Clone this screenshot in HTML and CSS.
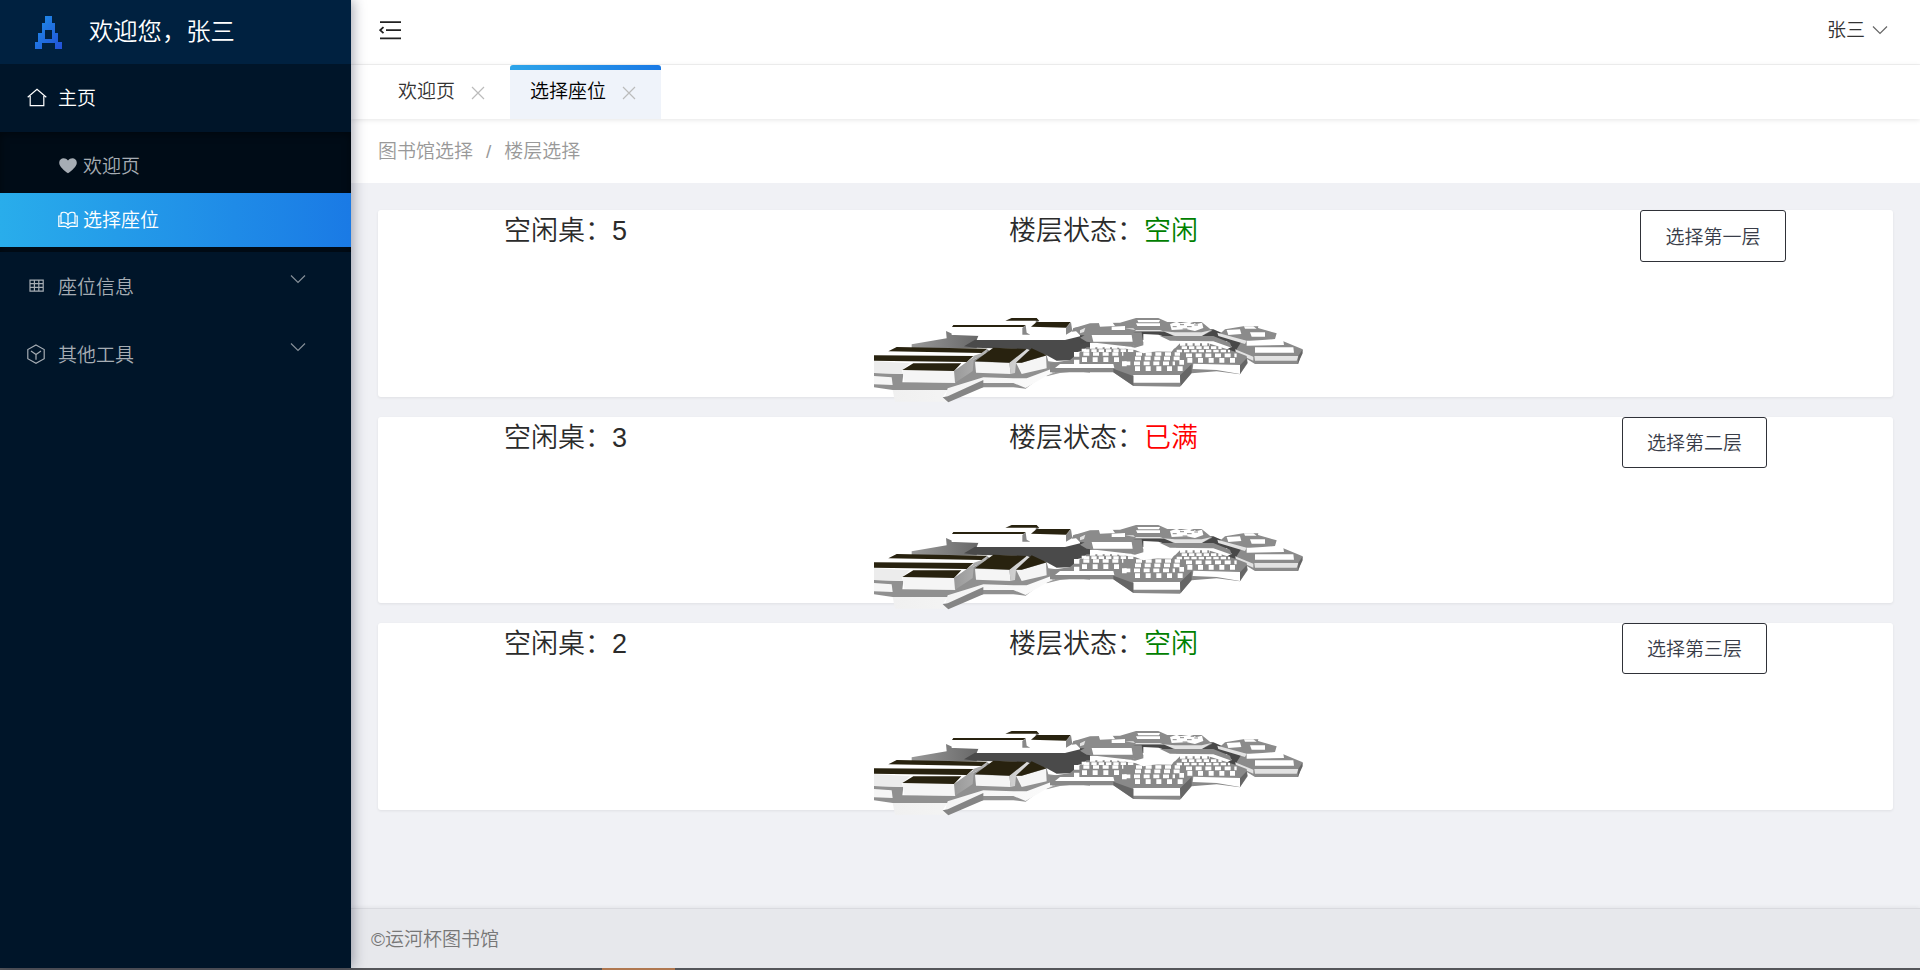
FILE: index.html
```html
<!DOCTYPE html>
<html lang="zh-CN">
<head>
<meta charset="utf-8">
<title>选择座位</title>
<link rel="stylesheet" href="styles.css">
</head>
<body>
<svg class="defs" aria-hidden="true">
  <defs>
    <linearGradient id="slope"><stop offset="0" stop-color="#999"/><stop offset="1" stop-color="#666"/></linearGradient>
    <linearGradient id="fade"><stop offset="0" stop-color="#f0f0f0"/><stop offset="1" stop-color="#fdfdfd"/></linearGradient>
    <linearGradient id="shade"><stop offset="0" stop-color="#999"/><stop offset="1" stop-color="#ddd"/></linearGradient>
    <linearGradient id="logoFill" x2="1" y2="1"><stop offset="0" stop-color="#1e90e8"/><stop offset="1" stop-color="#2350d8"/></linearGradient>
    <symbol id="building" viewBox="42 45 1290 264">
      <path fill="url(#slope)" d="M155 133L260 115 258 93 285 105 360 108 350 145 155 145z"/>
      <path fill="#4a4a4a" d="M345 119H610L690 96V150L655 155 640 180 590 182 560 166 500 148 345 143 312 139z"/>
      <path fill="#fff" d="M275 80H490L487 105H275zM436 62H530L520 82H497V76H450zM513 81L618 83V104H513zM355 108H615L675 96 685 103 615 120H350z"/>
      <path fill="#888" d="M487 84L497 76 500 98 511 104H487zM618 83L633 67 637 93 618 104zM640 84L690 76V88L636 95zM530 58L538 61 533 68H526z"/>
      <path fill="#28220f" d="M280 75H497L490 81H276zM455 54H530L537 62H436zM530 66H632L618 83 513 80z"/>
      <path fill="#909090" d="M42 219L130 222 127 247 285 248 340 180 382 148 400 160 500 150 560 166 565 184 600 188 690 178V204L600 213 550 225 497 266 460 262H370L262 271 98 270 42 262z"/>
      <path fill="#fff" d="M42 155L85 155 365 159 350 175 322 186 42 164z"/>
      <path fill="#ececec" d="M42 183L150 190 125 212 130 222 42 219z"/>
      <path fill="#f5f5f5" d="M42 228L95 232 98 255 42 253zM127 211L282 213 285 248 133 245zM345 185L448 188 452 222 348 218zM468 188H485L558 167 560 205 485 222z"/>
      <path fill="url(#shade)" d="M282 213L342 170 338 213 325 222 285 248zM448 188L500 148 508 150 468 188 465 219 452 222zM340 168L365 159 382 146 378 162 338 180z"/>
      <path fill="#28220f" d="M110 141L382 146 365 159 85 154zM42 166L340 168 320 186 42 182zM160 190H304L282 213 127 210zM400 143L500 147 448 188 345 184zM515 145L560 166 485 188H468z"/>
      <path fill="url(#fade)" d="M98 270H262L248 292 275 305H105zM263 265L370 232 460 235H500L600 197 690 191V201L595 207 497 264 460 249H370L255 292z"/>
      <path fill="#858585" d="M248 292L263 289 370 240V262L265 307z"/>
      <path fill="#9a9a9a" d="M560 227L600 210 690 204V218L650 214 600 219 560 229z"/>
      <g transform="translate(660 0)">
        <path fill="#484848" d="M0 95L160 92 400 88 480 122 525 150 520 180 430 145 190 120 0 130z"/>
        <path fill="#8b8b8b" d="M-20 85L30 70 120 68 168 54H235L262 66H365L397 92 365 108H280L260 96H165L135 100 0 106zM0 113L30 97H185L190 130 150 140 20 125zM435 88L490 79H535L534 84 590 100 585 117 500 124 415 106zM485 124H610L668 148 655 192 525 192 465 155z"/>
        <path fill="#fff" d="M55 64H95L105 78 60 80zM95 80L135 78V90H95zM172 60H240L237 67H175zM168 70H240V78H172zM35 105H155L158 125H40zM190 102L235 104 290 121 440 123 455 140 420 160 190 160zM440 90L480 88 484 102 445 105zM492 79H520L530 86H495zM510 97L555 97V110H515zM500 122H610L612 135 500 137zM525 142H640L642 158H525z"/>
        <path fill="#e2e2e2" d="M135 85H160L168 93H240L285 97H365L395 90 365 108H285L240 90H165zM0 91L16 83 12 96 0 100zM412 98L500 122 495 132 415 108zM523 168H655L650 182H525zM465 148L520 170V182L470 160z"/>
        <path fill="#8b8b8b" d="M240 108H400L450 128 455 143 400 124 270 122zM150 140L190 125V136L165 143z"/>
        <path fill="#fff" d="M270 72L290 65 300 70 330 65 350 72 366 68 370 84 345 93 320 88 275 90z"/>
        <path fill="none" stroke="#8b8b8b" stroke-width="3" d="M278 80H290M300 74H312M321 80H335M343 75H354M308 87H322M332 70H342"/>
        <path fill="#898989" d="M-12 165L20 142H105L165 150 190 160 285 145 300 130H385L475 158 500 168 503 190 480 223 410 214 335 220 300 260 160 258 100 217H-90V190L-30 180z"/>
        <path fill="#fff" d="M-60 192H100L103 204H-75zM340 191L480 195V222L410 210 338 207zM160 225H300V248H160zM190 145L285 142 275 155 195 154z"/>
        <path fill="#666" d="M100 206L160 228V257L100 217zM300 226L335 192V218L302 258zM480 196L500 175 502 188 480 222zM655 168L668 148V160L653 192z"/>
        <path fill="none" stroke="#fff" stroke-width="14" stroke-dasharray="15 17" d="M6 179H120M133 184V200M165 206H315M298 187H312M322 181H465"/>
        <path fill="none" stroke="#fff" stroke-width="11" stroke-dasharray="18 11" d="M10 162H130M133 190H285M165 175H300M168 162H300M318 166H470"/>
        <path fill="none" stroke="#fff" stroke-width="8" stroke-dasharray="16 6" d="M12 152H165M30 142H140M290 153H450M305 143H425M300 133H390"/>
        <path fill="#fff" d="M-18 156H-2V170H-18zM5 146H18V155H5zM-18 179H-2V192H-18z"/>
      </g>
    </symbol>
    <symbol id="chevron" viewBox="0 0 16 10"><path fill="none" stroke="currentColor" stroke-width="1.2" d="M1 1.5L8 8.5 15 1.5"/></symbol>
    <symbol id="close" viewBox="0 0 14 14"><path fill="none" stroke="currentColor" stroke-width="1.2" d="M1 1L13 13M13 1L1 13"/></symbol>
  </defs>
</svg>
<div class="app">
  <aside class="sidebar">
    <div class="brand">
      <svg class="logo" viewBox="0 0 27 33"><path fill="url(#logoFill)" fill-rule="evenodd" d="M10 0h7v7h3v10h3v9h4v7h-7v-6H7v6H0v-7h3v-9h4V7h3zM10 14v9h7v-9z"/></svg>
      <span>欢迎您，张三</span>
    </div>
    <nav>
      <div class="menu-item menu-open">
        <svg class="icon" viewBox="0 0 20 20"><path d="M.7 9.3L10 1.2 19.3 9.3M3.2 8V17.7H16.8V8"/></svg>
        <span>主页</span>
      </div>
      <div class="submenu">
        <div class="sub-item">
          <svg class="icon solid" viewBox="0 0 20 20"><path d="M10 17.3C6 14.3 1.2 10.5 1.2 6.7 1.2 2 7 .6 10 4.4 13 .6 18.8 2 18.8 6.7 18.8 10.5 14 14.3 10 17.3z"/></svg>
          <span>欢迎页</span>
        </div>
        <div class="sub-item sub-active">
          <svg class="icon" viewBox="0 0 20 20"><path d="M10 5C9 1.500 3 1.500 3 4V13.500C5 12.300 8.500 12.300 10 15 11.500 12.300 15 12.300 17 13.500V4C17 1.500 11 1.500 10 5V15M3 6H.8V16.300H7.500L10 18 12.500 16.300H19.200V6H17"/></svg>
          <span>选择座位</span>
        </div>
      </div>
      <div class="menu-item menu-closed">
        <svg class="icon" viewBox="0 0 20 20"><path d="M3 4.200H16.200V15.200H3zM3 7.600H16.200M3 11.400H16.200M7.400 4.200V15.200M11.800 4.200V15.200"/></svg>
        <span>座位信息</span>
        <svg class="arrow"><use href="#chevron"/></svg>
      </div>
      <div class="menu-item menu-closed">
        <svg class="icon" viewBox="0 0 20 20"><path d="M9 1L17.200 5.500V14.700L9 19.200 .8 14.700V5.500zM4 7L9 10.500 14 7M9 10.500V15.800"/></svg>
        <span>其他工具</span>
        <svg class="arrow"><use href="#chevron"/></svg>
      </div>
    </nav>
  </aside>
  <main class="main">
    <header class="topbar">
      <svg class="fold" viewBox="0 0 22 19"><path d="M1 1.200H22M7 9.200H22M1 17.400H22M4.500 6.200L1.200 9.200 4.500 12.200"/></svg>
      <div class="user"><span>张三</span><svg class="user-arrow"><use href="#chevron"/></svg></div>
    </header>
    <div class="tabs">
      <div class="tab"><span>欢迎页</span><svg class="close"><use href="#close"/></svg></div>
      <div class="tab tab-active"><span>选择座位</span><svg class="close"><use href="#close"/></svg></div>
    </div>
    <div class="crumbs"><span>图书馆选择</span><span class="slash">/</span><span>楼层选择</span></div>
    <div class="content">
      <section class="card">
        <div class="card-row">
          <div class="stat">空闲桌：5</div>
          <div class="stat">楼层状态：<span class="free">空闲</span></div>
          <div class="action action-first"><button class="btn btn-first">选择第一层</button></div>
        </div>
        <svg class="art"><use href="#building"/></svg>
      </section>
      <section class="card">
        <div class="card-row">
          <div class="stat">空闲桌：3</div>
          <div class="stat">楼层状态：<span class="full">已满</span></div>
          <div class="action"><button class="btn">选择第二层</button></div>
        </div>
        <svg class="art"><use href="#building"/></svg>
      </section>
      <section class="card">
        <div class="card-row">
          <div class="stat">空闲桌：2</div>
          <div class="stat">楼层状态：<span class="free">空闲</span></div>
          <div class="action"><button class="btn">选择第三层</button></div>
        </div>
        <svg class="art"><use href="#building"/></svg>
      </section>
    </div>
    <footer class="footer">©运河杯图书馆</footer>
  </main>
</div>
<div class="dock"><div class="dock-mark"></div></div>
</body>
</html>
```

FILE: styles.css
```css
* { box-sizing: border-box; }
body {
  margin: 0;
  height: 970px;
  display: flex;
  flex-direction: column;
  overflow: hidden;
  font: 350 19px/1.5 "Liberation Sans", "Noto Sans CJK SC DemiLight", "Noto Sans CJK SC", sans-serif;
  color: #333;
  background: #f0f1f5;
}
svg { display: block; flex: none; }
.defs { position: absolute; width: 0; height: 0; }
.app { display: flex; height: 968px; }

/* Sidebar */
.sidebar {
  position: relative;
  z-index: 2;
  width: 351px;
  flex: none;
  background: #001529;
  color: #a6adb4;
  box-shadow: 2px 0 12px rgba(29, 35, 60, .4);
}
.brand {
  display: flex;
  align-items: center;
  gap: 27px;
  height: 64px;
  padding-left: 35px;
  background: #002140;
  color: #fff;
  font-size: 24.3px;
  font-weight: 400;
}
.logo { width: 27px; height: 33px; }
.menu-item {
  display: flex;
  align-items: center;
  gap: 11px;
  height: 68px;
  padding: 0 45px 0 27px;
}
.menu-item span, .sub-item span { padding-top: 3px; }
.menu-closed span { padding-top: 5px; }
.menu-open { color: #fff; }
.icon { width: 20px; height: 20px; fill: none; stroke: currentColor; stroke-width: 1.2; }
.solid { fill: currentColor; stroke: none; }
.arrow { width: 16px; height: 10px; margin: -15px 0 0 auto; opacity: .8; }
.submenu {
  padding: 7px 0 5px;
  background: #000c17;
  box-shadow: inset 0 2px 8px rgba(0, 0, 0, .45);
}
.sub-item {
  display: flex;
  align-items: center;
  gap: 5px;
  height: 54px;
  padding-left: 58px;
}
.sub-active { color: #fff; background: linear-gradient(to right, #29adeb, #1a7ae5); }

/* Header */
.main { flex: 1; min-width: 0; display: flex; flex-direction: column; }
.topbar {
  display: flex;
  align-items: center;
  justify-content: space-between;
  height: 65px;
  padding: 0 32px 5px 28px;
  background: #fff;
  border-bottom: 1px solid #f2f2f2;
}
.fold { width: 22px; height: 19px; margin-top: 1px; fill: none; stroke: #222; stroke-width: 1.8; }
.user { display: flex; align-items: center; gap: 7px; }
.user span { padding-top: 3px; }
.user-arrow { width: 16px; height: 10px; margin-top: 1px; color: #666; }
.tabs {
  position: relative;
  z-index: 1;
  display: flex;
  height: 54px;
  padding-left: 28px;
  background: #fff;
  box-shadow: 0 1px 5px rgba(0, 0, 0, .1);
}
.tab {
  display: flex;
  align-items: center;
  gap: 16px;
  padding: 1px 25px 0 19px;
}
.tab-active {
  padding-left: 20px;
  color: #000;
  background: linear-gradient(to right, #2ea5e9, #1a7ae5) top / 100% 5px no-repeat #eff3fa;
  border-radius: 3px 3px 0 0;
}
.close { width: 14px; height: 14px; color: #bbb; }
.crumbs {
  display: flex;
  align-items: center;
  gap: 13px;
  height: 64px;
  padding: 2px 0 0 27px;
  background: #fff;
  color: #999;
}

/* Floor cards */
.content {
  flex: 1;
  display: flex;
  flex-direction: column;
  gap: 20px;
  padding: 27px 27px 0;
}
.card {
  height: 186.6px;
  flex: none;
  background: #fff;
  border-radius: 3px;
  box-shadow: 0 1px 3px rgba(0, 0, 0, .07);
}
.card-row { display: grid; grid-template-columns: 1fr 1fr 1fr; height: 105px; }
.stat { padding: 1px 0 0 126px; font-size: 27px; line-height: 40px; color: #2b2b2b; }
.free { color: #008000; }
.full { color: #f00; }
.action { padding-left: 234px; }
.action-first { padding-left: 252px; }
.btn {
  display: block;
  width: 145px;
  height: 51px;
  padding: 4px 0 0;
  background: #fff;
  border: 1px solid #2f3138;
  border-radius: 3px;
  font: inherit;
  color: #393d49;
}
.btn-first { width: 146px; height: 52px; }
.art { width: 430px; height: 88px; margin-left: 496px; }

/* Footer */
.footer {
  height: 60px;
  padding: 1px 0 0 20px;
  line-height: 60px;
  color: #777;
  background: #e7e8ec;
  border-top: 1px solid #d9dadf;
  box-shadow: 0 -1px 4px rgba(0, 0, 0, .06);
}
.dock { height: 2px; padding-left: 602px; background: #55565a; }
.dock-mark { width: 73px; height: 2px; background: #b07850; }
```
